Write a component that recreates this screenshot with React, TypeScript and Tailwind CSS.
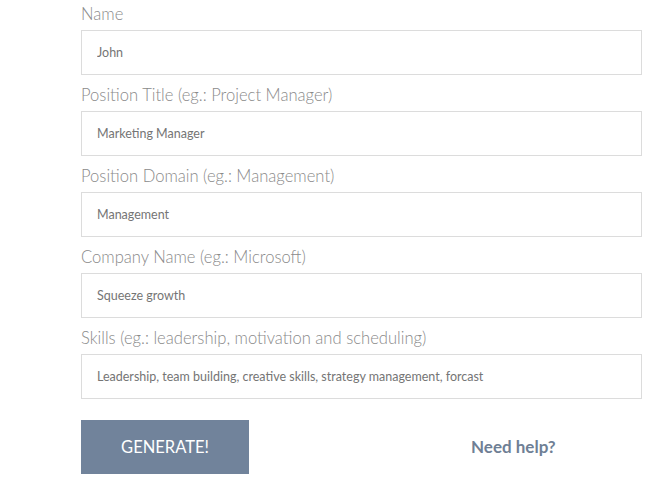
const fields = [
  { label: 'Name', value: 'John' },
  { label: 'Position Title (eg.: Project Manager)', value: 'Marketing Manager' },
  { label: 'Position Domain (eg.: Management)', value: 'Management' },
  { label: 'Company Name (eg.: Microsoft)', value: 'Squeeze growth' },
  {
    label: 'Skills (eg.: leadership, motivation and scheduling)',
    value: 'Leadership, team building, creative skills, strategy management, forcast',
  },
]

export default function App() {
  return (
    <div className="min-h-screen bg-white font-['Lato','Open_Sans',sans-serif]">
      <div className="ml-[81px] w-[561px] pt-[2px]">
        {fields.map((f) => (
          <div key={f.label} className="mb-[8px]">
            <label className="mb-[4px] block text-[16.6px] font-light leading-[24px] text-[#8a8a8a]">
              {f.label}
            </label>
            <input
              type="text"
              readOnly
              value={f.value}
              className="block h-[45px] w-full border border-[#dcdcdc] bg-white px-[15px] text-[12.5px] text-[#757575] outline-none"
            />
          </div>
        ))}

        <div className="mt-[21px] flex items-center">
          <button className="h-[54px] w-[168px] bg-[#71839b] text-[16.5px] text-white">
            GENERATE!
          </button>
          <a className="ml-[222px] text-[17px] font-bold text-[#6f7f95]">Need help?</a>
        </div>
      </div>
    </div>
  )
}
